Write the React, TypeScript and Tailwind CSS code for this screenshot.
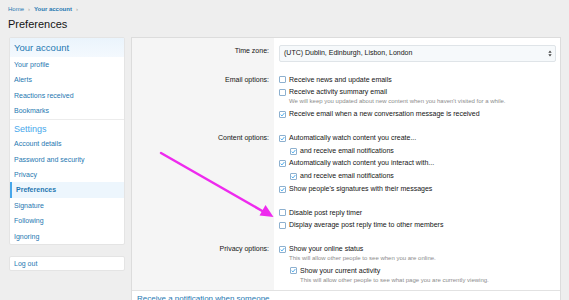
import { ReactNode } from 'react'

const BLUE = 'text-[#2577b1]'

function Box({ checked }: { checked?: boolean }) {
  return (
    <span className="w-[7px] h-[7px] shrink-0 border border-[#8db0cf] rounded-[1px] bg-white flex items-center justify-center">
      {checked && (
        <svg viewBox="0 0 8 8" className="w-[5px] h-[5px]">
          <path d="M1 4.2 L3.2 6.3 L7 1.6" stroke="#47a7eb" strokeWidth="1.5" fill="none" />
        </svg>
      )}
    </span>
  )
}

function Opt({ children, checked, nested }: { children: ReactNode; checked?: boolean; nested?: boolean }) {
  return (
    <div className={`flex items-center gap-[3px] h-[12.7px] leading-[12.7px] ${nested ? 'pl-[11px]' : ''}`}>
      <Box checked={checked} />
      <span className="text-[7px] text-[#141414] whitespace-nowrap">{children}</span>
    </div>
  )
}

function Hint({ children, nested }: { children: ReactNode; nested?: boolean }) {
  return (
    <div
      className={`-mt-[1.5px] mb-[2.5px] h-[8px] leading-[8px] text-[6px] text-[#8c8c8c] whitespace-nowrap ${nested ? 'pl-[21px]' : 'pl-[10px]'}`}
    >
      {children}
    </div>
  )
}

function Row({ label, children, cls }: { label: string; children: ReactNode; cls: string }) {
  return (
    <div className="flex">
      <div className={`w-[142px] shrink-0 bg-[#f5f5f5] pr-[5px] text-right text-[7px] text-[#141414] leading-[12.7px] ${cls}`}>
        {label}
      </div>
      <div className={`flex-1 pl-[5px] ${cls}`}>{children}</div>
    </div>
  )
}

const accountLinks = ['Your profile', 'Alerts', 'Reactions received', 'Bookmarks']
const settingLinks = ['Account details', 'Password and security', 'Privacy', 'Preferences', 'Signature', 'Following', 'Ignoring']

function NavItem({ label }: { label: string }) {
  const active = label === 'Preferences'
  return (
    <div
      className={`h-[15.4px] leading-[15.4px] pl-[4px] text-[7px] ${BLUE} ${
        active ? 'bg-[#edf6fd] font-bold border-l-[2px] border-[#47a7eb] pl-[2px]' : 'font-medium'
      }`}
    >
      {label}
    </div>
  )
}

export default function App() {
  return (
    <div className="relative w-[569px] h-[300px] overflow-hidden bg-[#eeeeee] font-['Liberation_Sans',Arial,sans-serif]">
      <div className="px-[8px] pt-[6px]">
        <div className="flex items-center gap-[4px] h-[7px] leading-[7px] text-[6px]">
          <span className={BLUE}>Home</span>
          <span className="text-[#9a9a9a]">›</span>
          <span className={`${BLUE} font-bold`}>Your account</span>
          <span className="text-[#9a9a9a]">›</span>
        </div>
        <div className="mt-[4px] h-[14px] leading-[14px] text-[11px] text-[#141414]">Preferences</div>
      </div>

      <div className="flex gap-[6px] pl-[9px] mt-[5.5px]">
        <div className="w-[116px] shrink-0 flex flex-col gap-[11px]">
          <div className="bg-white border border-[#e4e4e4] rounded-[2px]">
            <div className={`h-[19.6px] leading-[19.6px] pl-[4px] text-[9.5px] ${BLUE} bg-gradient-to-b from-[#eaf4fc] to-[#f4f9fe]`}>
              Your account
            </div>
            {accountLinks.map((l) => (
              <NavItem key={l} label={l} />
            ))}
            <div className="border-t border-[#ececec] h-[17.6px] leading-[18px] pl-[4px] text-[9px] text-[#47a7eb]">Settings</div>
            {settingLinks.map((l) => (
              <NavItem key={l} label={l} />
            ))}
          </div>
          <div className="bg-white border border-[#e4e4e4] rounded-[2px] h-[15px] leading-[14px] pl-[4px] text-[7px] font-medium text-[#2577b1]">
            Log out
          </div>
        </div>

        <div className="w-[430px] shrink-0 h-[270px] bg-white border border-[#dcdcdc] border-b-0">
          <Row label="Time zone:" cls="pt-[7px] pb-[6.5px]">
            <div className="h-[17px] border border-[#dfe4e8] rounded-[2px] bg-[#f6f9fb] flex items-center justify-between pl-[4px] pr-[3px] mr-[4px]">
              <span className="text-[7px] text-[#141414]">(UTC) Dublin, Edinburgh, Lisbon, London</span>
              <svg viewBox="0 0 6 10" className="w-[4px] h-[7px]">
                <path d="M3 0.5 L5.5 4 L0.5 4 Z M3 9.5 L5.5 6 L0.5 6 Z" fill="#444" />
              </svg>
            </div>
          </Row>
          <Row label="Email options:" cls="pt-[5.5px] pb-[6px]">
            <Opt>Receive news and update emails</Opt>
            <Opt>Receive activity summary email</Opt>
            <Hint>We will keep you updated about new content when you haven't visited for a while.</Hint>
            <Opt checked>Receive email when a new conversation message is received</Opt>
          </Row>
          <Row label="Content options:" cls="pt-[5.5px] pb-[5.5px]">
            <Opt checked>Automatically watch content you create...</Opt>
            <Opt checked nested>and receive email notifications</Opt>
            <Opt checked>Automatically watch content you interact with...</Opt>
            <Opt checked nested>and receive email notifications</Opt>
            <Opt checked>Show people's signatures with their messages</Opt>
            <div className="h-[11px]" />
            <Opt>Disable post reply timer</Opt>
            <Opt>Display average post reply time to other members</Opt>
          </Row>
          <Row label="Privacy options:" cls="pt-[5.5px] pb-[4px]">
            <Opt checked>Show your online status</Opt>
            <Hint>This will allow other people to see when you are online.</Hint>
            <Opt checked nested>Show your current activity</Opt>
            <Hint nested>This will allow other people to see what page you are currently viewing.</Hint>
          </Row>
          <div className="border-t border-[#e2e2e2] pt-[3px] pl-[5px] text-[8px] leading-[9px] text-[#2577b1]">
            Receive a notification when someone...
          </div>
        </div>
      </div>

      <svg className="absolute left-0 top-0 pointer-events-none" width="569" height="300">
        <line x1="161" y1="153" x2="264" y2="212" stroke="#ee2aee" strokeWidth="2.5" strokeLinecap="round" />
        <path d="M273.5 217 L259.5 215.5 L265.5 205 Z" fill="#ee2aee" />
      </svg>
    </div>
  )
}
